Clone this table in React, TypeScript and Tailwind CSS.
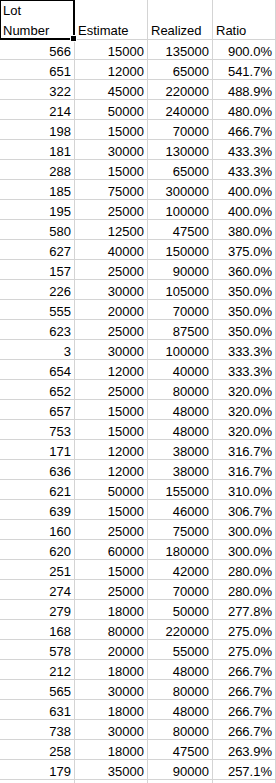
import React from 'react';

const rows: [number, number, number, string][] = [
  [566, 15000, 135000, '900.0%'],
  [651, 12000, 65000, '541.7%'],
  [322, 45000, 220000, '488.9%'],
  [214, 50000, 240000, '480.0%'],
  [198, 15000, 70000, '466.7%'],
  [181, 30000, 130000, '433.3%'],
  [288, 15000, 65000, '433.3%'],
  [185, 75000, 300000, '400.0%'],
  [195, 25000, 100000, '400.0%'],
  [580, 12500, 47500, '380.0%'],
  [627, 40000, 150000, '375.0%'],
  [157, 25000, 90000, '360.0%'],
  [226, 30000, 105000, '350.0%'],
  [555, 20000, 70000, '350.0%'],
  [623, 25000, 87500, '350.0%'],
  [3, 30000, 100000, '333.3%'],
  [654, 12000, 40000, '333.3%'],
  [652, 25000, 80000, '320.0%'],
  [657, 15000, 48000, '320.0%'],
  [753, 15000, 48000, '320.0%'],
  [171, 12000, 38000, '316.7%'],
  [636, 12000, 38000, '316.7%'],
  [621, 50000, 155000, '310.0%'],
  [639, 15000, 46000, '306.7%'],
  [160, 25000, 75000, '300.0%'],
  [620, 60000, 180000, '300.0%'],
  [251, 15000, 42000, '280.0%'],
  [274, 25000, 70000, '280.0%'],
  [279, 18000, 50000, '277.8%'],
  [168, 80000, 220000, '275.0%'],
  [578, 20000, 55000, '275.0%'],
  [212, 18000, 48000, '266.7%'],
  [565, 30000, 80000, '266.7%'],
  [631, 18000, 48000, '266.7%'],
  [738, 30000, 80000, '266.7%'],
  [258, 18000, 47500, '263.9%'],
  [179, 35000, 90000, '257.1%'],
];

const Cell = ({ children }: { children?: React.ReactNode }) => (
  <div className="h-[20px] border-r border-b border-[#d4d4d4] pr-[3px] pt-[4px] text-right leading-[15px] whitespace-nowrap overflow-hidden">
    {children}
  </div>
);

const HeadCell = ({ children }: { children?: React.ReactNode }) => (
  <div className="h-[40px] border-r border-b border-[#d4d4d4] pl-[3px] pt-[21px] leading-[20px] whitespace-nowrap overflow-hidden">
    {children}
  </div>
);

export default function App() {
  return (
    <div
      className="w-[276px] h-[783px] overflow-hidden bg-white text-[13px] text-black"
      style={{ fontFamily: '"Liberation Sans", Arial, sans-serif' }}
    >
      <div className="grid grid-cols-[75px_73px_65px_63px]">
        <div className="relative h-[40px] border-r border-b border-[#d4d4d4]">
          <div className="pl-[3px] pt-[1px] leading-[20px]">
            Lot
            <br />
            Number
          </div>
          <div className="absolute -left-px -top-px w-[76px] h-[41px] border-2 border-black" />
          <div className="absolute right-[-3px] bottom-[-3px] w-[5px] h-[5px] bg-black border border-white box-content" />
        </div>
        <HeadCell>Estimate</HeadCell>
        <HeadCell>Realized</HeadCell>
        <HeadCell>Ratio</HeadCell>
        {rows.map(([lot, est, real, ratio]) => (
          <React.Fragment key={lot}>
            <Cell>{lot}</Cell>
            <Cell>{est}</Cell>
            <Cell>{real}</Cell>
            <Cell>{ratio}</Cell>
          </React.Fragment>
        ))}
        <Cell />
        <Cell />
        <Cell />
        <Cell />
      </div>
    </div>
  );
}
